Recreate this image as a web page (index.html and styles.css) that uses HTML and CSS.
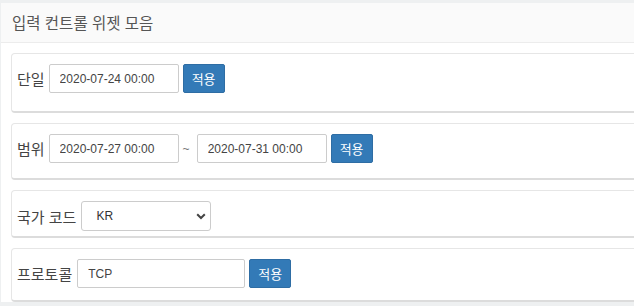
FILE: index.html
```html
<!DOCTYPE html>
<html lang="ko">
<head>
<meta charset="utf-8">
<title>입력 컨트롤 위젯 모음</title>
<link rel="stylesheet" href="styles.css">
</head>
<body>
<div class="panel">
  <div class="panel-head">입력 컨트롤 위젯 모음</div>
  <div class="panel-body">
    <div class="card card-a">
      <div class="row">
        <label class="lbl lbl-short">단일</label>
        <input class="field" type="text" value="2020-07-24 00:00">
        <button class="btn">적용</button>
      </div>
    </div>
    <div class="card card-b">
      <div class="row">
        <label class="lbl lbl-short">범위</label>
        <input class="field" type="text" value="2020-07-27 00:00">
        <span class="tilde">~</span>
        <input class="field" type="text" value="2020-07-31 00:00">
        <button class="btn">적용</button>
      </div>
    </div>
    <div class="card card-c">
      <div class="row">
        <label class="lbl">국가 코드</label>
        <div class="select-wrap">
          <select class="select">
            <option>KR</option>
            <option>US</option>
            <option>JP</option>
          </select>
          <svg class="chev" width="10" height="7" viewBox="0 0 10 7"><path d="M1.2 1.2 L5 5 L8.8 1.2" fill="none" stroke="#444" stroke-width="2"/></svg>
        </div>
      </div>
    </div>
    <div class="card card-d">
      <div class="row">
        <label class="lbl">프로토콜</label>
        <input class="field field-wide" type="text" value="TCP">
        <button class="btn">적용</button>
      </div>
    </div>
  </div>
</div>
</body>
</html>
```

FILE: styles.css
```css
html, body {
  margin: 0;
  padding: 0;
}
body {
  background: #eef0f1;
  overflow: hidden;
  height: 306px;
  font-family: "Liberation Sans", Arial, "Noto Sans CJK KR", sans-serif;
}
.panel {
  margin: 3px 0 0 1px;
  width: 720px;
  background: #fff;
}
.panel-head {
  height: 39px;
  line-height: 39px;
  background: #fafafa;
  border-bottom: 1px solid #ececec;
  padding-left: 11px;
  font-family: "Noto Sans CJK KR", sans-serif;
  font-size: 15.5px;
  color: #555;
}
.panel-body {
  padding: 10px 0 0 10px;
}
.card {
  border: 1px solid #e6e6e6;
  border-bottom: 2px solid #dcdcdc;
  border-radius: 4px;
  padding: 10px 5px 10px 5px;
  margin-bottom: 10px;
}
.card-a { padding-bottom: 18px; }
.card-b { padding-bottom: 15px; }
.card-c { padding-bottom: 5px; }
.card-d { padding-bottom: 12px; margin-bottom: 0; }
.row {
  display: flex;
  align-items: center;
  height: 29px;
}
.card-c .row { height: 30px; }
.lbl {
  font-family: "Noto Sans CJK KR", sans-serif;
  font-size: 15px;
  font-weight: 400;
  color: #444;
  margin-right: 5px;
}
.lbl-short {
  margin-right: 4px;
}
.field {
  box-sizing: border-box;
  width: 130px;
  height: 29px;
  border: 1px solid #ccc;
  border-radius: 2px;
  padding: 0 10px;
  font-family: "Liberation Sans", Arial, sans-serif;
  font-size: 12px;
  color: #444;
  background: #fff;
  margin: 0;
  outline: none;
}
.field-wide {
  width: 168px;
}
.tilde {
  font-family: "Liberation Sans", Arial, sans-serif;
  font-size: 12px;
  color: #777;
  margin: 0 7px 0 4px;
}
.btn {
  box-sizing: border-box;
  height: 29px;
  width: 42px;
  margin: 0 0 0 4px;
  padding: 0;
  border: 1px solid #2e6da4;
  border-radius: 2px;
  background: #337ab7;
  color: #fff;
  font-family: "Noto Sans CJK KR", sans-serif;
  font-size: 13px;
}
.select-wrap {
  position: relative;
  width: 130px;
  height: 30px;
}
.select {
  box-sizing: border-box;
  width: 130px;
  height: 30px;
  border: 1px solid #ccc;
  border-radius: 3px;
  padding: 0 0 0 14px;
  font-family: "Liberation Sans", Arial, sans-serif;
  font-size: 12px;
  color: #333;
  background: #fff;
  appearance: none;
  -webkit-appearance: none;
  margin: 0;
}
.chev {
  position: absolute;
  right: 5px;
  top: 12px;
  pointer-events: none;
}
```
